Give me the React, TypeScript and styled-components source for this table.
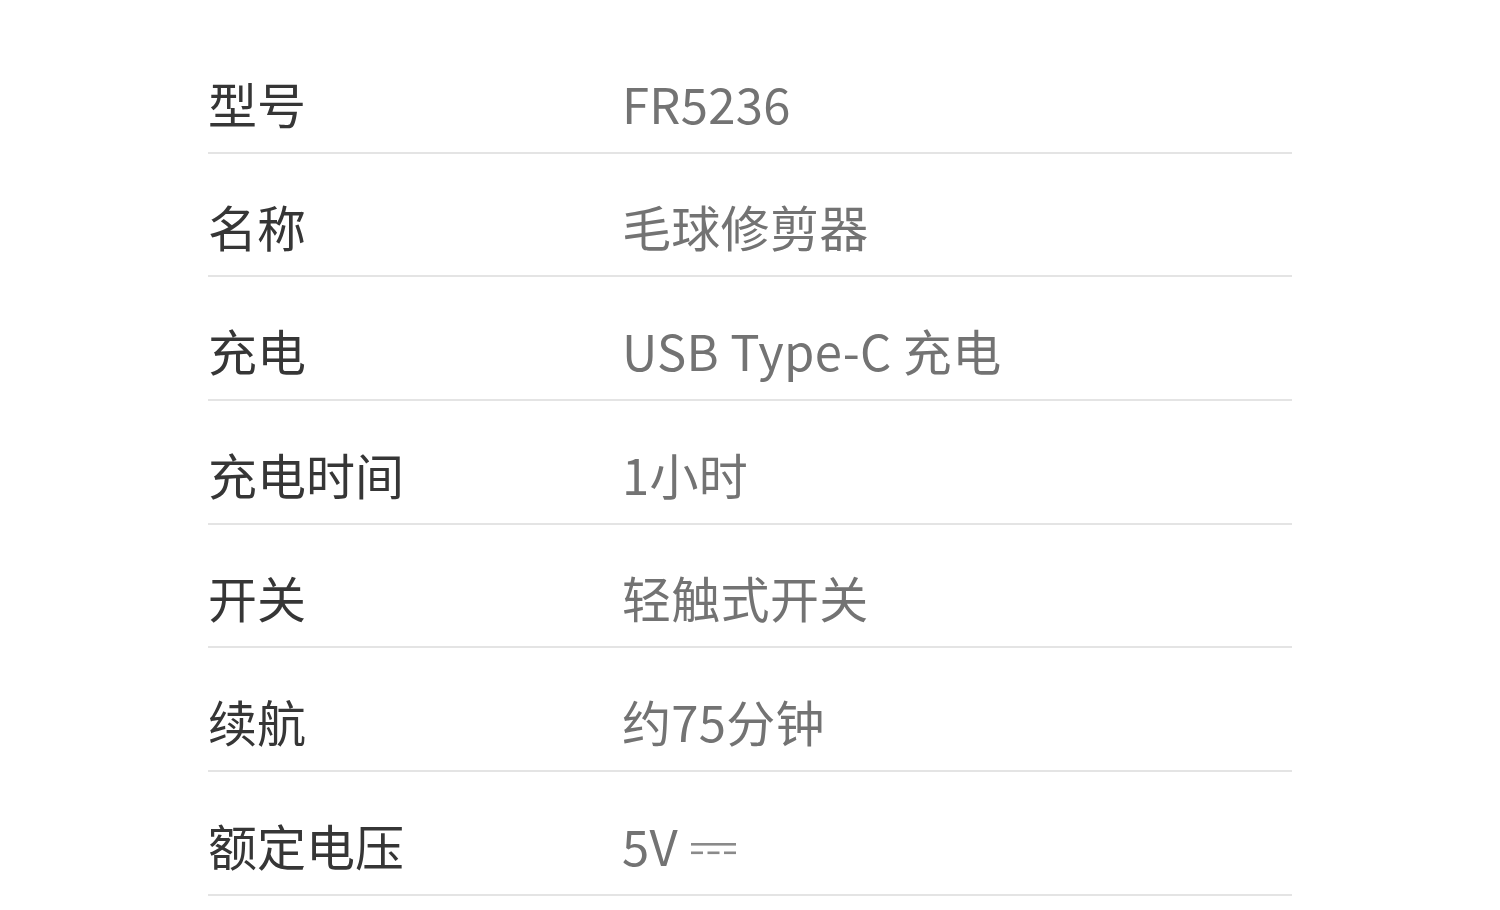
import React from 'react'
import styled, { createGlobalStyle } from 'styled-components'

type Spec = {
	label: string
	value: string
	dc?: boolean
}

const specs: Spec[] = [
	{ label: '型号', value: 'FR5236' },
	{ label: '名称', value: '毛球修剪器' },
	{ label: '充电', value: 'USB Type-C 充电' },
	{ label: '充电时间', value: '1小时' },
	{ label: '开关', value: '轻触式开关' },
	{ label: '续航', value: '约75分钟' },
	{ label: '额定电压', value: '5V', dc: true },
]

const DcIcon = () => (
	<svg width="45" height="14" viewBox="0 0 45 14">
		<rect x="0" y="1" width="45" height="2.6" fill="#8a8a8a" />
		<rect x="0" y="9.5" width="12" height="2.6" fill="#8a8a8a" />
		<rect x="16.5" y="9.5" width="12" height="2.6" fill="#8a8a8a" />
		<rect x="33" y="9.5" width="12" height="2.6" fill="#8a8a8a" />
	</svg>
)

export default function App() {
	return (
		<>
			<GlobalStyle />
			<Page>
				<Table>
					{specs.map((s) => (
						<Row key={s.label}>
							<Label>{s.label}</Label>
							<Value>
								{s.value}
								{s.dc && (
									<DcWrap>
										<DcIcon />
									</DcWrap>
								)}
							</Value>
						</Row>
					))}
				</Table>
			</Page>
		</>
	)
}

const GlobalStyle = createGlobalStyle`
	html, body {
		margin: 0;
		padding: 0;
		background: #ffffff;
	}
	body {
		font-family: "Noto Sans CJK SC", "Noto Sans", sans-serif;
	}
`

const Page = styled.div`
	width: 1500px;
	height: 910px;
	overflow: hidden;
	background: #ffffff;
	padding-top: 30px;
	box-sizing: border-box;
`

const Table = styled.div`
	margin-left: 208px;
	width: 1084px;
	display: flex;
	flex-direction: column;
`

const Row = styled.div`
	box-sizing: border-box;
	height: 123.67px;
	display: flex;
	align-items: flex-end;
	padding-bottom: 25px;
	border-bottom: 2px solid #e4e4e4;
`

const Label = styled.div`
	width: 414px;
	flex: 0 0 414px;
	font-size: 49px;
	line-height: 49px;
	color: #363636;
`

const Value = styled.div`
	flex: 1;
	display: flex;
	align-items: center;
	font-size: 49px;
	line-height: 49px;
	color: #737373;
	letter-spacing: 0.3px;
`

const DcWrap = styled.span`
	display: inline-flex;
	margin-left: 13px;
	margin-top: 9px;
`
